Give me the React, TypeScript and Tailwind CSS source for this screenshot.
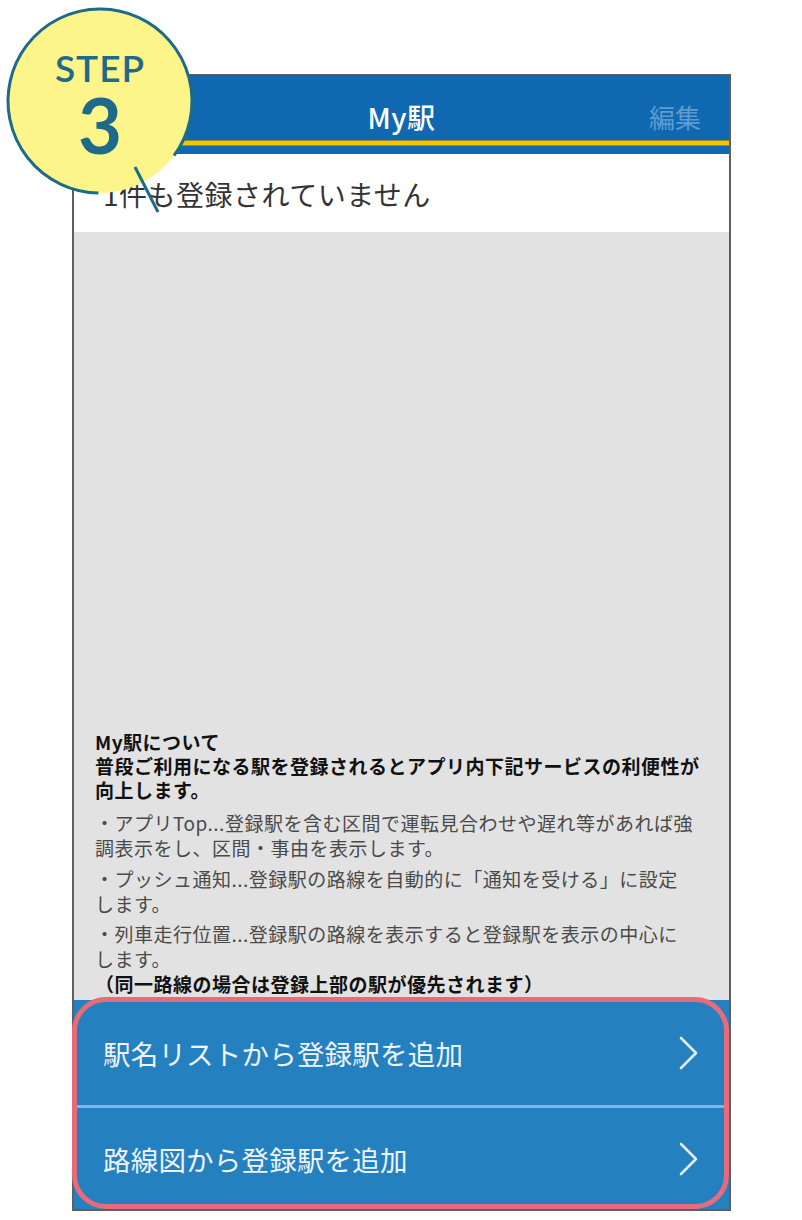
import React from "react";

const jp = { fontFamily: '"Noto Sans CJK JP", "Noto Sans", sans-serif' };

function Chevron() {
  return (
    <svg width="22" height="36" viewBox="0 0 22 36" className="shrink-0">
      <polyline
        points="4,3 19,18 4,33"
        fill="none"
        stroke="#e2ecf5"
        strokeWidth="2.6"
        strokeLinecap="round"
        strokeLinejoin="round"
      />
    </svg>
  );
}

function StepBadge() {
  return (
    <div className="absolute left-0 top-0 w-[220px] h-[220px] pointer-events-none">
      <svg width="220" height="220" className="absolute left-0 top-0">
        <circle cx="100" cy="101" r="92" fill="#fdf58a" />
        <path
          d="M 98.4 193 A 92 92 0 1 1 174 155.7"
          fill="none"
          stroke="#1d6a8a"
          strokeWidth="3"
        />
        <path d="M 135 167 L 158 212" stroke="#1d6a8a" strokeWidth="3" />
      </svg>
      {/* Badge text */}
      <div
        className="absolute left-[8px] top-[48px] w-[184px] flex flex-col items-center text-[#1d6a8a]"
        style={{ fontFamily: 'Lato, "Open Sans", sans-serif' }}
      >
        <span className="text-[37px] leading-[40px] font-semibold tracking-[1px]">STEP</span>
        <span className="text-[76px] leading-[74px] font-bold">3</span>
      </div>
    </div>
  );
}

export default function App() {
  return (
    <div className="relative w-[802px] h-[1220px] bg-white overflow-hidden" style={jp}>
      <div className="pl-[72px] pt-[74px]">
        <div className="w-[659px] h-[1137px] border-x-2 border-b-2 border-t border-[#5f5f5f] flex flex-col bg-[#e2e2e2]">
          {/* Header */}
          <div className="h-[65px] shrink-0 bg-[#1069b0] grid grid-cols-[1fr_auto_1fr] items-start pt-[27px]">
            <div />
            <div className="text-white text-[28px] leading-[30px] font-medium tracking-[0.5px]">My駅</div>
            <div className="text-right pr-[28px] text-[#5e9bd0] text-[26px] leading-[30px]">編集</div>
          </div>
          <div className="h-[6px] shrink-0 bg-[#f3c400] border-y border-[#9a8a2a]" />
          <div className="h-[8px] shrink-0 bg-[#1069b0]" />

          {/* Empty state */}
          <div className="h-[78px] shrink-0 bg-white flex items-center pl-[29px] pt-[2px]">
            <span className="text-[28px] leading-[32px] tracking-[0.5px] text-[#333]">1件も登録されていません</span>
          </div>

          {/* Info */}
          <div className="flex-1 flex flex-col justify-end pl-[21px] pb-[4px] text-[19px] tracking-[0.5px]">
            <div className="font-bold text-[#111] leading-[24px]">
              <div>My駅について</div>
              <div className="whitespace-nowrap">普段ご利用になる駅を登録されるとアプリ内下記サービスの利便性が</div>
              <div>向上します。</div>
            </div>
            <div className="mt-[8px] text-[#4a4a4a] leading-[25px]">
              <div className="whitespace-nowrap">・アプリTop...登録駅を含む区間で運転見合わせや遅れ等があれば強</div>
              <div>調表示をし、区間・事由を表示します。</div>
            </div>
            <div className="mt-[6px] text-[#4a4a4a] leading-[25px]">
              <div className="whitespace-nowrap">・プッシュ通知...登録駅の路線を自動的に「通知を受ける」に設定</div>
              <div>します。</div>
            </div>
            <div className="mt-[5px] text-[#4a4a4a] leading-[25px]">
              <div className="whitespace-nowrap">・列車走行位置...登録駅の路線を表示すると登録駅を表示の中心に</div>
              <div>します。</div>
            </div>
            <div className="mt-[1px] font-bold text-[#111] leading-[24px]">（同一路線の場合は登録上部の駅が優先されます）</div>
          </div>

          {/* Add actions */}
          <div className="h-[209px] shrink-0 bg-[#2580c0] flex flex-col">
            <div className="h-[105px] flex items-center justify-between pl-[29px] pr-[30px]">
              <span className="text-[27.5px] leading-[32px] tracking-[0.2px] text-[#eef4fa]">駅名リストから登録駅を追加</span>
              <Chevron />
            </div>
            <div className="h-[3px] bg-[#86b6dc]" />
            <div className="flex-1 flex items-center justify-between pl-[29px] pr-[30px]">
              <span className="text-[27.5px] leading-[32px] tracking-[0.2px] text-[#eef4fa]">路線図から登録駅を追加</span>
              <Chevron />
            </div>
          </div>
        </div>
      </div>

      {/* Highlight outline */}
      <div className="absolute left-[72px] top-[997px] w-[657px] h-[212px] rounded-[34px] border-[5px] border-[#e86b7b] pointer-events-none" />

      <StepBadge />
    </div>
  );
}
